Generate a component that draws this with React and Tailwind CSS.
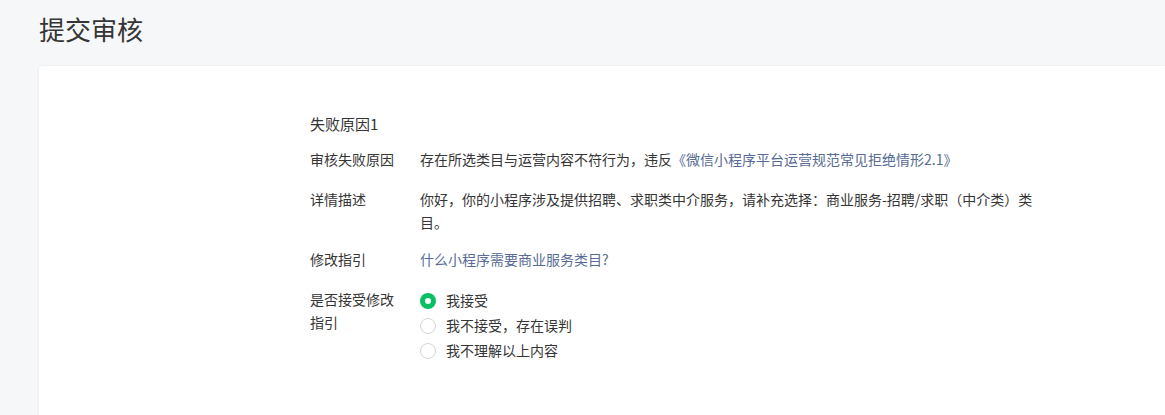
import React, { useState } from "react";

const font = { fontFamily: '"Noto Sans CJK SC", "Noto Sans", sans-serif' };

const options = ["我接受", "我不接受，存在误判", "我不理解以上内容"];

const Row = ({ label, children, className = "" }) => (
  <div className={`flex text-[14px] leading-[23px] ${className}`}>
    <div className="w-[110px] shrink-0 pr-[20px] text-[#353535]">{label}</div>
    <div className="w-[630px] text-[#353535]">{children}</div>
  </div>
);

const App = () => {
  const [choice, setChoice] = useState(0);

  return (
    <div className="min-h-[415px] bg-[#f6f7f9] overflow-hidden" style={font}>
      <h1 className="pl-[39px] pt-[9px] text-[26px] leading-[40px] text-[#353535]">提交审核</h1>

      <div className="ml-[39px] mt-[17px] h-[360px] rounded-tl-[4px] bg-white shadow-[0_0_3px_rgba(0,0,0,0.08)]">
        <div className="pl-[271px] pt-[46px]">
          <div className="text-[15px] leading-[24px] text-[#353535]">失败原因1</div>

          <Row label="审核失败原因" className="mt-[12px]">
            存在所选类目与运营内容不符行为，违反
            <a className="text-[#576b95]">《微信小程序平台运营规范常见拒绝情形2.1》</a>
          </Row>

          <Row label="详情描述" className="mt-[17px]">
            你好，你的小程序涉及提供招聘、求职类中介服务，请补充选择：商业服务-招聘/求职（中介类）类目。
          </Row>

          <Row label="修改指引" className="mt-[14px]">
            <a className="text-[#576b95]">什么小程序需要商业服务类目?</a>
          </Row>

          <Row label="是否接受修改指引" className="mt-[17px]">
            <div className="flex flex-col gap-[2px] pt-[1px]">
              {options.map((opt, i) => (
                <label key={opt} className="flex items-center gap-[10px] cursor-pointer" onClick={() => setChoice(i)}>
                  {choice === i ? (
                    <span className="flex h-[16px] w-[16px] items-center justify-center rounded-full bg-[#07c160]">
                      <span className="h-[6px] w-[6px] rounded-full bg-white" />
                    </span>
                  ) : (
                    <span className="h-[16px] w-[16px] rounded-full border border-[#d5d5d9] bg-white" />
                  )}
                  <span>{opt}</span>
                </label>
              ))}
            </div>
          </Row>
        </div>
      </div>
    </div>
  );
};

export default App;
